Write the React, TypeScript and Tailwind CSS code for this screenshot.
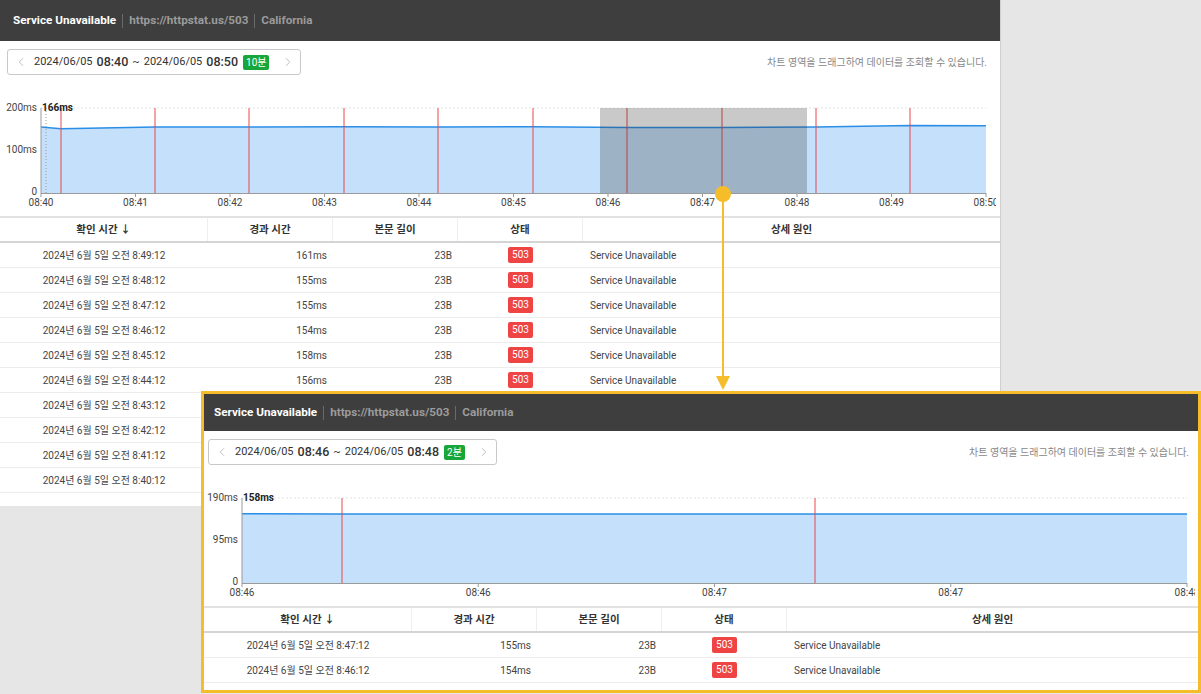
import { ChevronLeft, ChevronRight } from "lucide-react";

type Row = { time: string; ms: string };

type ChartProps = {
  width: number;
  left: number;
  right: number;
  yMax: number;
  yLabels: string[];
  xTicks: { x: number; label: string }[];
  points: [number, number][];
  reds: number[];
  selection?: [number, number];
  tip: string;
  hoverX?: number;
};

const TOP = 33;
const BOTTOM = 118;

function Chart({ width, left, right, yMax, yLabels, xTicks, points, reds, selection, tip, hoverX }: ChartProps) {
  const y = (v: number) => BOTTOM - (v / yMax) * (BOTTOM - TOP);
  const line = points.map(([x, v], i) => `${i ? "L" : "M"}${x},${y(v).toFixed(1)}`).join(" ");
  const area = `${line} L${right},${BOTTOM} L${left},${BOTTOM} Z`;
  const mid = (TOP + BOTTOM) / 2;

  return (
    <svg width={width} height={141} className="block">
      {/* grid */}
      <line x1={left} x2={right} y1={TOP} y2={TOP} stroke="#e3e3e3" strokeDasharray="2 2" />
      <line x1={left} x2={right} y1={mid} y2={mid} stroke="#e3e3e3" strokeDasharray="2 2" />

      {/* area + line */}
      <path d={area} fill="#c5e0fb" />
      <path d={line} fill="none" stroke="#2b8ee6" strokeWidth={1.5} />

      {/* failed checks */}
      {reds.map((x) => (
        <line key={x} x1={x} x2={x} y1={TOP} y2={BOTTOM} stroke="#e5484d" strokeWidth={1} />
      ))}

      {selection && (
        <rect x={selection[0]} y={TOP} width={selection[1] - selection[0]} height={BOTTOM - TOP} fill="#2f2f2f" opacity={0.26} />
      )}

      {hoverX !== undefined && (
        <line x1={hoverX} x2={hoverX} y1={TOP} y2={BOTTOM} stroke="#9a9a9a" strokeDasharray="1 2" />
      )}

      {/* axes */}
      <line x1={left} x2={left} y1={TOP} y2={BOTTOM} stroke="#9a9a9a" />
      <line x1={left} x2={right} y1={BOTTOM + 0.5} y2={BOTTOM + 0.5} stroke="#9a9a9a" />
      {xTicks.map((t) => (
        <g key={t.x + t.label}>
          <line x1={t.x} x2={t.x} y1={BOTTOM} y2={BOTTOM + 4} stroke="#9a9a9a" />
          <text x={t.x} y={BOTTOM + 10} textAnchor="middle" dominantBaseline="middle" fontSize={10} fill="#444">
            {t.label}
          </text>
        </g>
      ))}

      <text x={left - 4} y={TOP} textAnchor="end" dominantBaseline="middle" fontSize={10} fill="#444">{yLabels[0]}</text>
      <text x={left - 4} y={mid} textAnchor="end" dominantBaseline="middle" fontSize={10} fill="#444">{yLabels[1]}</text>
      <text x={left - 4} y={BOTTOM - 1} textAnchor="end" dominantBaseline="middle" fontSize={10} fill="#444">0</text>

      <text x={left + 1} y={TOP} dominantBaseline="middle" fontSize={10} fontWeight={700} fill="#222">{tip}</text>
    </svg>
  );
}

function Header({ h, px }: { h: string; px: string }) {
  return (
    <div className={`flex items-center bg-[#3e3e3e] text-[11.7px] font-bold ${h} ${px}`}>
      <span className="text-white">Service Unavailable</span>
      <span className="mx-[6px] h-[14px] w-px bg-[#6a6a6a]" />
      <span className="text-[#9b9b9b]">https://httpstat.us/503</span>
      <span className="mx-[6px] h-[14px] w-px bg-[#6a6a6a]" />
      <span className="text-[#9b9b9b]">California</span>
    </div>
  );
}

function RangePicker({ from, to, span }: { from: string; to: string; span: string }) {
  return (
    <div className="flex h-[26px] items-center rounded-[3px] border border-[#c9c9c9] bg-white pl-[6px] pr-[5px] text-[#333]">
      <ChevronLeft size={14} strokeWidth={1.3} className="text-[#aaa]" />
      <span className="ml-[6px] text-[11px]">2024/06/05</span>
      <span className="ml-[4px] text-[12.5px] font-medium">{from}</span>
      <span className="mx-[4px] text-[11px]">~</span>
      <span className="text-[11px]">2024/06/05</span>
      <span className="ml-[4px] text-[12.5px] font-medium">{to}</span>
      <span className="ml-[5px] rounded-[2px] bg-[#17a63a] px-[3px] text-[10px] leading-[15px] text-white">{span}</span>
      <ChevronRight size={14} strokeWidth={1.3} className="ml-[12px] text-[#aaa]" />
    </div>
  );
}

function Table({ rows }: { rows: Row[] }) {
  const cols = "grid grid-cols-[208px_125px_125px_125px_1fr]";
  return (
    <div>
      <div className={`${cols} h-[27px] border-y-2 border-t-[#e2e2e2] border-b-[#d4d4d4] text-[10.5px] font-bold text-[#333]`}>
        <div className="flex items-center justify-center border-r border-[#eee]">확인 시간 ↓</div>
        <div className="flex items-center justify-center border-r border-[#eee]">경과 시간</div>
        <div className="flex items-center justify-center border-r border-[#eee]">본문 길이</div>
        <div className="flex items-center justify-center border-r border-[#eee]">상태</div>
        <div className="flex items-center justify-center">상세 원인</div>
      </div>
      {rows.map((r) => (
        <div key={r.time} className={`${cols} h-[25px] items-center border-b border-[#ececec] text-[10px] text-[#444]`}>
          <div className="text-center">{r.time}</div>
          <div className="pr-[6px] text-right">{r.ms}</div>
          <div className="pr-[6px] text-right">23B</div>
          <div className="flex justify-center">
            <span className="rounded-[2px] bg-[#ef4444] px-[4px] text-[10px] leading-[16px] text-white">503</span>
          </div>
          <div className="pl-[7px]">Service Unavailable</div>
        </div>
      ))}
    </div>
  );
}

const mainRows: Row[] = [
  { time: "2024년 6월 5일 오전 8:49:12", ms: "161ms" },
  { time: "2024년 6월 5일 오전 8:48:12", ms: "155ms" },
  { time: "2024년 6월 5일 오전 8:47:12", ms: "155ms" },
  { time: "2024년 6월 5일 오전 8:46:12", ms: "154ms" },
  { time: "2024년 6월 5일 오전 8:45:12", ms: "158ms" },
  { time: "2024년 6월 5일 오전 8:44:12", ms: "156ms" },
  { time: "2024년 6월 5일 오전 8:43:12", ms: "157ms" },
  { time: "2024년 6월 5일 오전 8:42:12", ms: "155ms" },
  { time: "2024년 6월 5일 오전 8:41:12", ms: "155ms" },
  { time: "2024년 6월 5일 오전 8:40:12", ms: "152ms" },
];

const zoomRows: Row[] = [
  { time: "2024년 6월 5일 오전 8:47:12", ms: "155ms" },
  { time: "2024년 6월 5일 오전 8:46:12", ms: "154ms" },
];

const hint = "차트 영역을 드래그하여 데이터를 조회할 수 있습니다.";

export default function App() {
  const mainTicks = ["08:40", "08:41", "08:42", "08:43", "08:44", "08:45", "08:46", "08:47", "08:48", "08:49", "08:50"].map(
    (label, i) => ({ x: 41 + i * 94.5, label })
  );
  const zoomTicks = ["08:46", "08:46", "08:47", "08:47", "08:48"].map((label, i) => ({ x: 38 + i * 236.25, label }));

  return (
    <div
      className="relative h-[694px] w-[1201px] overflow-hidden bg-[#e6e6e6]"
      style={{ fontFamily: 'Roboto, "Noto Sans CJK KR", sans-serif' }}
    >
      {/* Main panel */}
      <div className="w-[1001px] border-r border-[#d0d0d0] bg-white pb-[13px]">
        <Header h="h-[41px]" px="px-[13px]" />
        <div className="mt-[8px] flex items-center justify-between pl-[7px] pr-[13px]">
          <RangePicker from="08:40" to="08:50" span="10분" />
          <span className="text-[10px] text-[#888]">{hint}</span>
        </div>
        <Chart
          width={996}
          left={41}
          right={986}
          yMax={200}
          yLabels={["200ms", "100ms"]}
          xTicks={mainTicks}
          points={[[41, 155], [61, 151], [155, 155], [249, 155], [344, 156], [438, 155], [533, 156], [627, 154], [722, 154], [816, 155], [910, 159], [986, 158]]}
          reds={[61, 155, 249, 344, 438, 533, 627, 722, 816, 910]}
          selection={[600, 807]}
          tip="166ms"
          hoverX={46}
        />
        <Table rows={mainRows} />
      </div>

      {/* connector */}
      <svg className="absolute left-[713px] top-[184px]" width={20} height={208}>
        <line x1={10} x2={10} y1={10} y2={194} stroke="#f5bd2a" strokeWidth={2} />
        <polygon points="3,192 17,192 10,206" fill="#f5bd2a" />
        <circle cx={10} cy={10} r={8} fill="#f5bd2a" />
      </svg>

      {/* Zoomed panel */}
      <div className="absolute left-[201px] top-[391px] w-[1000px] border-[3px] border-[#f5bd2a] bg-white pb-[7px]">
        <Header h="h-[37px]" px="px-[10px]" />
        <div className="mt-[8px] flex items-center justify-between pl-[4px] pr-[9px]">
          <RangePicker from="08:46" to="08:48" span="2분" />
          <span className="text-[10px] text-[#888]">{hint}</span>
        </div>
        <Chart
          width={991}
          left={38}
          right={983}
          yMax={190}
          yLabels={["190ms", "95ms"]}
          xTicks={zoomTicks}
          points={[[38, 155], [138, 154], [611, 154], [983, 154]]}
          reds={[138, 611]}
          tip="158ms"
        />
        <Table rows={zoomRows} />
      </div>
    </div>
  );
}
